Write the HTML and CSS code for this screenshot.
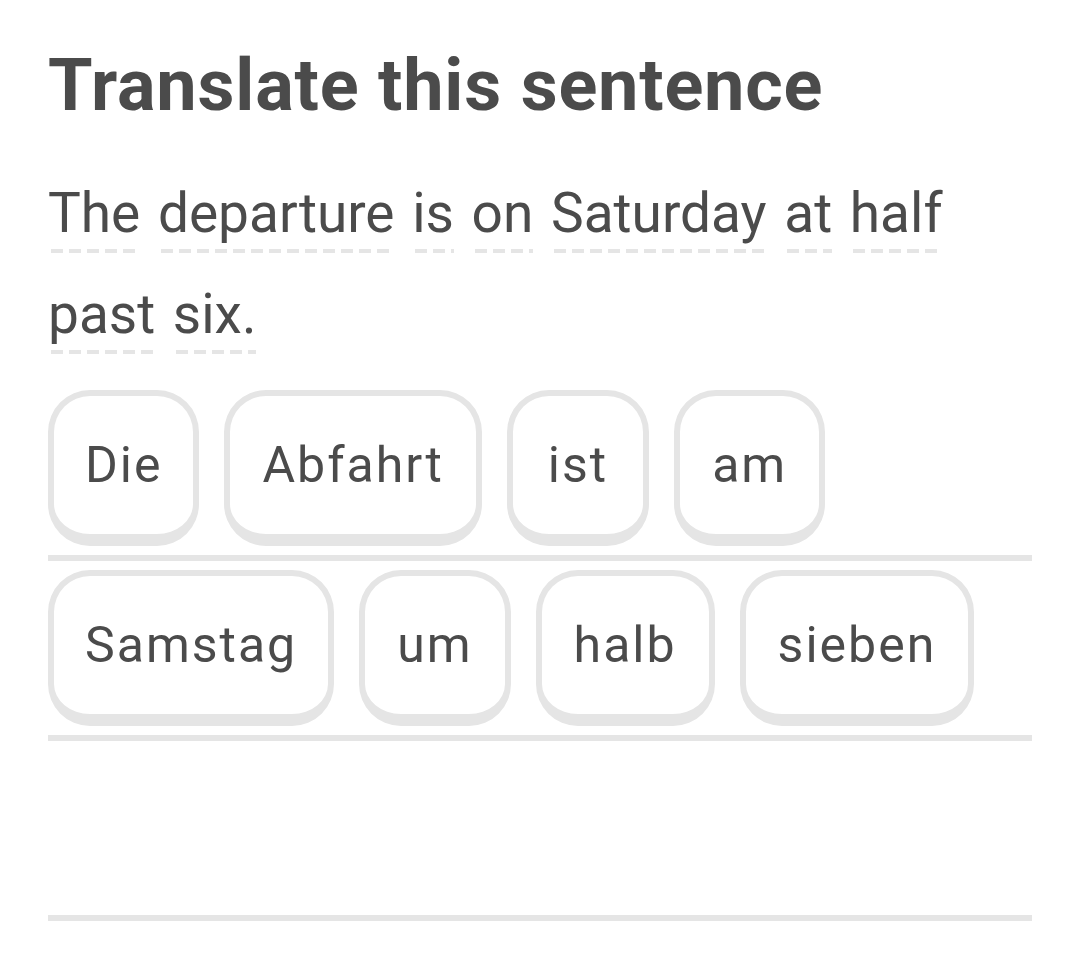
FILE: index.html
```html
<!DOCTYPE html>
<html lang="en">
<head>
<meta charset="utf-8">
<title>Translate this sentence</title>
<link rel="stylesheet" href="styles.css">
</head>
<body>
<main class="challenge">
  <h1 class="title">Translate this sentence</h1>
  <p class="prompt"><span class="word">The</span> <span class="word">departure</span> <span class="word">is</span> <span class="word">on</span> <span class="word">Saturday</span> <span class="word">at</span> <span class="word">half</span> <span class="word">past</span> <span class="word">six.</span></p>
  <div class="answer">
    <div class="row">
      <span class="tile">Die</span>
      <span class="tile">Abfahrt</span>
      <span class="tile tile-narrow">ist</span>
      <span class="tile">am</span>
    </div>
    <div class="row">
      <span class="tile">Samstag</span>
      <span class="tile">um</span>
      <span class="tile">halb</span>
      <span class="tile">sieben</span>
    </div>
    <div class="row"></div>
  </div>
</main>
</body>
</html>
```

FILE: styles.css
```css
html, body {
  margin: 0;
  padding: 0;
  background: #ffffff;
}

body {
  font-family: Roboto, "Noto Sans", Arial, sans-serif;
  color: #4b4b4b;
}

.challenge {
  width: 984px;
  padding: 46px 0 0 48px;
}

.title {
  margin: 0;
  font-size: 72px;
  line-height: 80px;
  font-weight: 700;
  letter-spacing: 0.8px;
}

.prompt {
  margin: 37px 0 0 0;
  font-size: 55px;
  line-height: 101px;
  font-weight: 400;
  word-spacing: 4px;
}

.word {
  padding-bottom: 8px;
  background-image: linear-gradient(to right, #e5e5e5 12px, transparent 12px);
  background-size: 18px 4px;
  background-repeat: repeat-x;
  background-position: 3px 100%;
}

.answer {
  margin-top: 16px;
}

.row {
  display: flex;
  gap: 25px;
  box-sizing: border-box;
  height: 180px;
  padding: 9px 0;
  border-bottom: 6px solid #e5e5e5;
}

.tile {
  box-sizing: border-box;
  height: 156px;
  padding: 0 32px;
  border: 6px solid #e5e5e5;
  border-bottom-width: 12px;
  border-radius: 42px;
  font-size: 50px;
  line-height: 138px;
  letter-spacing: 2px;
  white-space: nowrap;
}

.tile:first-child {
  padding: 0 31px;
}

.tile-narrow {
  padding: 0 35px;
}
```
